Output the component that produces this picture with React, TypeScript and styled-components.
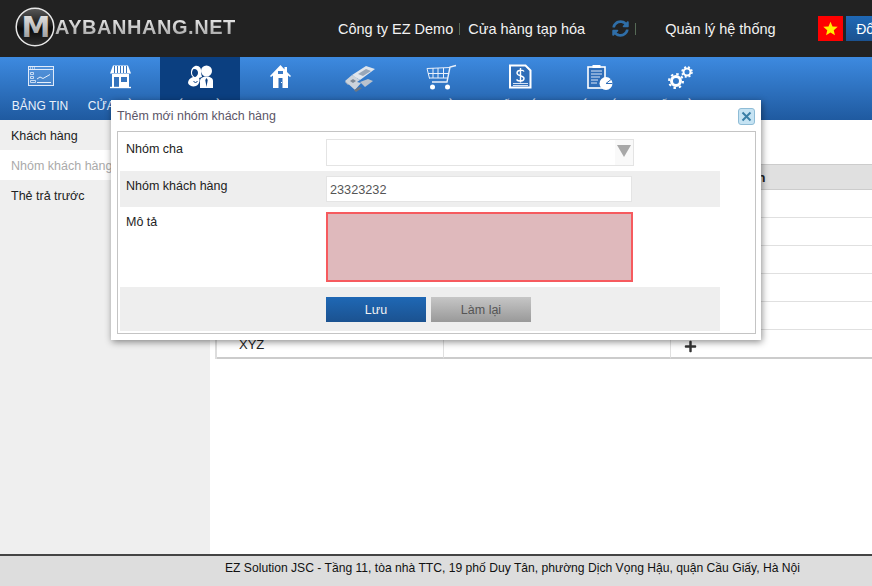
import styled, { createGlobalStyle } from 'styled-components';
import { FaPlus, FaSyncAlt } from 'react-icons/fa';

const GlobalStyle = createGlobalStyle`
  html, body {
    margin: 0;
    padding: 0;
    background: #fff;
    font-family: "Liberation Sans", Arial, sans-serif;
  }
  * {
    box-sizing: border-box;
  }
`;

const DashboardIcon = () => (
  <svg width="40" height="32" viewBox="0 0 40 32" fill="none">
    <rect x="8.5" y="4.5" width="25" height="19" fill="#fff" fillOpacity="0.12" stroke="#dfeafa" />
    <path d="M9 7.5h24" stroke="#dfeafa" />
    <path d="M10 6h1M12 6h1M14 6h1" stroke="#fff" />
    <path d="M10.5 10.5h3v2h-3zM10.5 14.5h3v2h-3zM10.5 18.5h5v2h-5z" stroke="#e6effb" strokeWidth="0.8" />
    <path d="M17 17l3-2 3 1.5 7-4" stroke="#e6effb" />
    <path d="M17 20.5h14" stroke="#e6effb" />
  </svg>
);

const StoreIcon = () => (
  <svg width="40" height="32" viewBox="0 0 40 32" fill="none">
    <path d="M13 3.5h15l3 8H10z" fill="#fff" />
    <path d="M14.5 4v7M17.5 4v7M20.5 4v7M23.5 4v7M26.5 4v7" stroke="#3674bd" />
    <path d="M12 12h17v13H12z" fill="#fff" />
    <rect x="14" y="15" width="5" height="10" fill="#3674bd" />
    <rect x="21" y="15" width="6" height="5" fill="#3674bd" />
    <path d="M10 25.5h21" stroke="#fff" strokeWidth="1.4" />
  </svg>
);

const UsersIcon = () => (
  <svg width="40" height="32" viewBox="0 0 40 32" fill="none">
    <path d="M15 4c4-1 7 2 6 7l1 4-3 1c1 2 1 6-3 8-3 1-7 0-8-3 0-3 2-5 5-6-3-2-3-9 2-11z" fill="#fff" />
    <path d="M14 7c3 0 4 2 4 4s-2 4-3 4-3-2-3-4 1-4 2-4z" fill="#0b3f80" />
    <path d="M13.5 19l2 2 2-2" stroke="#0b3f80" />
    <circle cx="26.5" cy="9" r="5.5" fill="#fff" />
    <path d="M20 26v-7c0-3 3-4.500 6.500-4.500S33 16 33 19v7z" fill="#fff" />
    <path d="M26.500 16l-1.200 2 1.200 7 1.200-7z" fill="#0b3f80" />
  </svg>
);

const HomeIcon = () => (
  <svg width="40" height="32" viewBox="0 0 40 32">
    <path d="M20.500 3L10 14l1 1 2-1.500V26h15V13.500l2 1.500 1-1-4-4V5h-2.500v2.500z" fill="#fff" />
    <rect x="18" y="9" width="5" height="3" fill="#3a7bc7" />
    <rect x="18.500" y="16" width="4" height="10" fill="#2f6fba" />
    <rect x="21" y="20" width="1" height="1" fill="#fff" />
  </svg>
);

const MoneyIcon = () => (
  <svg width="40" height="32" viewBox="0 0 40 32">
    <path d="M5 20L22 8l3 2-17 13z" fill="#a9b4c2" />
    <path d="M12 13L26 4l9 3-15 11z" fill="#dfe5ec" />
    <path d="M18 12l8-5 5 2-8 5z" fill="#99a7b8" />
    <path d="M5 19l7-6 8 5-3 2 4 1-6 7z" fill="#ccd3db" />
    <path d="M20 20l8-3 5 2-8 6z" fill="#b9c2cd" />
    <path d="M14 28l5-3 3 1-6 4z" fill="#6e7782" />
    <path d="M10 19l3-2 3 2-3 2z" fill="#7f8995" />
  </svg>
);

const CartIcon = () => (
  <svg width="40" height="32" viewBox="0 0 40 32" fill="none" stroke="#e9f0fa">
    <path d="M36 3.500l-6 1.500-3 15H12" strokeWidth="1.400" />
    <path d="M7 6.500l23-1M8 11.500h21M9 16h19M7 6.500l2.500 10M13 6v10M18 6v10M23.500 6v10" />
    <circle cx="12.500" cy="25" r="2.500" fill="#fff" stroke="none" />
    <circle cx="27.500" cy="25" r="2.500" fill="#fff" stroke="none" />
  </svg>
);

const InvoiceIcon = () => (
  <svg width="40" height="32" viewBox="0 0 40 32" fill="none">
    <path d="M10 3.500h15.500l5 5v17H10z" fill="#2e6db8" stroke="#fff" strokeWidth="2" />
    <path d="M13 21.500h15M13 23.500h15" stroke="#d6e4f6" />
    <path d="M24 9.500c-1-2-7-2-7 1.500s7 2 7 5.500-6 3-7.500 1M20.500 6v14.500" stroke="#fff" strokeWidth="1.400" />
  </svg>
);

const ReportIcon = () => (
  <svg width="40" height="32" viewBox="0 0 40 32" fill="none">
    <rect x="8" y="5" width="17" height="21" fill="#2e6db8" stroke="#fff" strokeWidth="1.600" />
    <rect x="12.500" y="3" width="8" height="3" fill="#fff" />
    <path d="M11 9h11M11 12h11M11 15h9M11 18h7M11 21h6" stroke="#dbe7f7" />
    <circle cx="26" cy="21.500" r="6.500" fill="#fff" />
    <path d="M26 21.500l5-4M26 21.500h6.500" stroke="#2e6db8" />
  </svg>
);

const GearsIcon = () => (
  <svg width="40" height="32" viewBox="0 0 40 32" fill="none" stroke="#fff">
    <circle cx="16" cy="19" r="4.500" strokeWidth="3" />
    <circle cx="16" cy="19" r="7" strokeWidth="2" strokeDasharray="2.500 3" />
    <circle cx="27" cy="10" r="3.500" strokeWidth="2" />
    <circle cx="27" cy="10" r="5" strokeWidth="1.500" strokeDasharray="2 2" />
  </svg>
);

const menu = [
  { label: 'BẢNG TIN', icon: <DashboardIcon /> },
  { label: 'CỬA HÀNG', icon: <StoreIcon /> },
  { label: 'KHÁCH HÀNG', icon: <UsersIcon />, active: true },
  { label: 'KHO', icon: <HomeIcon /> },
  { label: 'THU CHI', icon: <MoneyIcon /> },
  { label: 'ĐƠN HÀNG', icon: <CartIcon /> },
  { label: 'KẾ TOÁN', icon: <InvoiceIcon /> },
  { label: 'BÁO CÁO', icon: <ReportIcon /> },
  { label: 'CẤU HÌNH', icon: <GearsIcon /> },
];

const sideItems = ['Khách hàng', 'Nhóm khách hàng', 'Thẻ trả trước'];
const groups = ['Nhóm A', 'Nhóm B', 'Nhóm C', 'Nhóm D', 'Nhóm E', 'XYZ'];

export default function App() {
  return (
    <Page>
      <GlobalStyle />
      <Header>
        <LogoArea>
          <svg width="40" height="40" viewBox="0 0 40 40">
            <defs>
              <linearGradient id="badge" x1="0" y1="0" x2="0" y2="1">
                <stop offset="0" stopColor="#5a5a5a" />
                <stop offset="0.55" stopColor="#0b0b0b" />
                <stop offset="1" stopColor="#2e2e2e" />
              </linearGradient>
              <linearGradient id="badgeM" x1="0" y1="0" x2="0" y2="1">
                <stop offset="0" stopColor="#f0f0f0" />
                <stop offset="1" stopColor="#8c8c8c" />
              </linearGradient>
            </defs>
            <circle cx="20" cy="20" r="18.800" fill="url(#badge)" stroke="#e8e8e8" strokeWidth="1.500" />
            <text
              x="21"
              y="30"
              textAnchor="middle"
              fontFamily="DejaVu Sans, sans-serif"
              fontWeight="700"
              fontSize="29"
              fill="url(#badgeM)"
            >
              M
            </text>
          </svg>
          <Wordmark>AYBANHANG.NET</Wordmark>
        </LogoArea>
        <HeaderLink>Công ty EZ Demo</HeaderLink>
        <HeaderDivider />
        <HeaderLink>Cửa hàng tạp hóa</HeaderLink>
        <SyncButton>
          <FaSyncAlt size={17} />
        </SyncButton>
        <HeaderDivider />
        <SystemLink>Quản lý hệ thống</SystemLink>
        <Flag>
          <svg width="15" height="15" viewBox="0 0 24 24">
            <path d="M12 1l3.200 7.600 8.300.7-6.300 5.400 1.900 8.100L12 18.500l-7.100 4.300 1.900-8.100L.5 9.300l8.300-.7z" fill="#ffef00" />
          </svg>
        </Flag>
        <HeaderButton>Đổi mật khẩu</HeaderButton>
      </Header>

      <Nav>
        {menu.map((item) => (
          <NavItem key={item.label} $active={item.active}>
            {item.icon}
            <NavLabel>{item.label}</NavLabel>
          </NavItem>
        ))}
      </Nav>

      <Body>
        <Sidebar>
          {sideItems.map((item, i) => (
            <SideItem key={item} $active={i === 1}>
              {item}
            </SideItem>
          ))}
        </Sidebar>
        <Main>
          <GroupTable>
            <thead>
              <tr>
                <HeadCell>Nhóm khách hàng</HeadCell>
                <HeadCell>Mô tả</HeadCell>
                <ActionHead>Thêm con</ActionHead>
              </tr>
            </thead>
            <tbody>
              {groups.map((group) => (
                <tr key={group}>
                  <NameCell>{group}</NameCell>
                  <Cell />
                  <PlusCell>
                    <FaPlus size={13} color="#333" />
                  </PlusCell>
                </tr>
              ))}
            </tbody>
          </GroupTable>
        </Main>
      </Body>

      <Footer>EZ Solution JSC - Tầng 11, tòa nhà TTC, 19 phố Duy Tân, phường Dịch Vọng Hậu, quận Cầu Giấy, Hà Nội</Footer>

      <Modal>
        <ModalHead>
          <ModalTitle>Thêm mới nhóm khách hàng</ModalTitle>
          <CloseButton>
            <svg width="11" height="11" viewBox="0 0 11 11">
              <path d="M1.500 1.500l8 8M9.500 1.500l-8 8" stroke="#3a7fa6" strokeWidth="2" />
            </svg>
          </CloseButton>
        </ModalHead>
        <FormBox>
          <FormRow $height={39}>
            <FieldLabel $top={10}>Nhóm cha</FieldLabel>
            <SelectBox>
              <SelectArrow>
                <svg width="14" height="12" viewBox="0 0 14 12">
                  <path d="M0 0h14L7 12z" fill="#a8a8a8" />
                </svg>
              </SelectArrow>
            </SelectBox>
          </FormRow>
          <FormRow $height={36} $shaded>
            <FieldLabel $top={8}>Nhóm khách hàng</FieldLabel>
            <TextBox>23323232</TextBox>
          </FormRow>
          <FormRow $height={80}>
            <FieldLabel $top={8}>Mô tả</FieldLabel>
            <ErrorArea />
          </FormRow>
          <ButtonRow>
            <SaveButton>Lưu</SaveButton>
            <ResetButton>Làm lại</ResetButton>
          </ButtonRow>
        </FormBox>
      </Modal>
    </Page>
  );
}

const Page = styled.div`
  position: relative;
  display: flex;
  flex-direction: column;
  width: 872px;
  height: 586px;
  overflow: hidden;
`;

const Header = styled.header`
  display: flex;
  align-items: center;
  flex: 0 0 57px;
  background: #222;
  color: #fff;
`;

const LogoArea = styled.div`
  display: flex;
  align-items: center;
  flex: 0 0 338px;
  padding-left: 15px;
  padding-bottom: 3px;
`;

const Wordmark = styled.span`
  font-size: 20px;
  font-weight: 700;
  letter-spacing: 0.55px;
  background: linear-gradient(#f2f2f2, #9c9c9c);
  -webkit-background-clip: text;
  background-clip: text;
  color: transparent;
`;

const HeaderLink = styled.span`
  flex-shrink: 0;
  font-size: 14.5px;
  color: #f2f2f2;
`;

const HeaderDivider = styled.span`
  flex-shrink: 0;
  width: 1px;
  height: 12px;
  margin: 0 8px 0 6px;
  background: #566a56;
`;

const SyncButton = styled.span`
  display: flex;
  flex-shrink: 0;
  margin-left: 27px;
  color: #2f6ea8;
`;

const SystemLink = styled(HeaderLink)`
  margin-left: 21px;
  width: 153px;
`;

const Flag = styled.span`
  display: flex;
  align-items: center;
  justify-content: center;
  flex: 0 0 25px;
  height: 25px;
  background: #f00;
`;

const HeaderButton = styled.button`
  flex-shrink: 0;
  height: 25px;
  margin-left: 3px;
  padding: 0 10px;
  border: 0;
  background: linear-gradient(#1f68b5, #1b5290);
  color: #fff;
  font: 14px "Liberation Sans", Arial, sans-serif;
`;

const Nav = styled.nav`
  display: flex;
  flex: 0 0 63px;
  background: linear-gradient(#3d8ae0, #1f5aa0);
`;

const NavItem = styled.div<{ $active?: boolean }>`
  display: flex;
  flex-direction: column;
  align-items: center;
  flex: 0 0 80px;
  min-width: 0;
  padding-top: 5px;
  background: ${({ $active }) => ($active ? '#0b3f80' : 'transparent')};
`;

const NavLabel = styled.span`
  margin-top: 5px;
  font-size: 12px;
  line-height: 15px;
  white-space: nowrap;
  color: #e9f1fb;
`;

const Body = styled.div`
  display: flex;
  flex: 1;
  min-height: 0;
`;

const Sidebar = styled.aside`
  flex: 0 0 210px;
  background: #efefef;
`;

const SideItem = styled.div<{ $active?: boolean }>`
  height: 30px;
  padding: 1px 0 0 11px;
  font-size: 12.5px;
  line-height: 30px;
  background: ${({ $active }) => ($active ? '#fff' : 'transparent')};
  color: ${({ $active }) => ($active ? '#aaa' : '#222')};
`;

const Main = styled.main`
  flex: 1;
  min-width: 0;
  padding: 44px 0 0 5px;
  overflow: hidden;
  background: #fff;
`;

const GroupTable = styled.table`
  width: 720px;
  table-layout: fixed;
  border-collapse: separate;
  border-spacing: 0;
  border-left: 2px solid #ddd;
  font-size: 13px;
  color: #222;

  tbody tr:last-child td {
    height: 29px;
    border-bottom: 2px solid #ccc;
  }
`;

const HeadCell = styled.th`
  width: 227px;
  height: 26px;
  padding: 0;
  border-top: 1px solid #ccc;
  border-bottom: 1px solid #ccc;
  background: #e0e0e0;
  font-weight: 700;
  text-align: center;
`;

const ActionHead = styled(HeadCell)`
  width: auto;
  padding-left: 33px;
  text-align: left;
  white-space: nowrap;
`;

const Cell = styled.td`
  height: 28px;
  padding: 0;
  border-bottom: 1px solid #e0e0e0;
  border-right: 1px solid #e0e0e0;
`;

const NameCell = styled(Cell)`
  padding: 2px 0 0 22px;
`;

const PlusCell = styled(Cell)`
  padding: 8px 0 0 13px;
  border-right: 0;
`;

const Footer = styled.footer`
  flex: 0 0 32px;
  padding-left: 225px;
  border-top: 2px solid #444;
  background: #ddd;
  font-size: 12.13px;
  line-height: 25px;
  color: #111;
  white-space: nowrap;
`;

const Modal = styled.div`
  position: absolute;
  top: 100px;
  left: 111px;
  width: 650px;
  height: 240px;
  padding: 0 5px 0 6px;
  background: #fff;
  box-shadow: 1px 2px 7px rgba(0, 0, 0, 0.45);
`;

const ModalHead = styled.div`
  display: flex;
  align-items: center;
  justify-content: space-between;
  height: 31px;
  padding-right: 1px;
`;

const ModalTitle = styled.span`
  font-size: 12.45px;
  color: #5c5668;
`;

const CloseButton = styled.span`
  display: flex;
  align-items: center;
  justify-content: center;
  width: 17px;
  height: 17px;
  margin-top: 1px;
  border: 1px solid #8fbcd6;
  border-radius: 3px;
  background: #c5e3f3;
`;

const FormBox = styled.div`
  height: 203px;
  padding: 0 2px;
  border: 1px solid #c4c4c4;
`;

const FormRow = styled.div<{ $height: number; $shaded?: boolean }>`
  display: flex;
  align-items: flex-start;
  width: 600px;
  height: ${({ $height }) => $height}px;
  background: ${({ $shaded }) => ($shaded ? '#eee' : 'transparent')};
`;

const FieldLabel = styled.label<{ $top: number }>`
  flex: 0 0 206px;
  padding: ${({ $top }) => $top}px 0 0 6px;
  font-size: 12.5px;
  line-height: 15px;
  color: #222;
`;

const SelectBox = styled.div`
  display: flex;
  justify-content: flex-end;
  width: 308px;
  height: 27px;
  margin-top: 7px;
  border: 1px solid #e4e4e4;
`;

const SelectArrow = styled.div`
  display: flex;
  justify-content: center;
  padding-top: 5px;
  width: 18px;
  background: #f9f9f9;
`;

const TextBox = styled.div`
  width: 306px;
  height: 26px;
  margin-top: 5px;
  padding-left: 3px;
  border: 1px solid #e4e4e4;
  background: #fff;
  font-size: 12.7px;
  line-height: 26px;
  color: #555;
`;

const ErrorArea = styled.div`
  width: 307px;
  height: 70px;
  margin-top: 5px;
  border: 2px solid #f65a5e;
  background: #dfb9bc;
`;

const ButtonRow = styled.div`
  display: flex;
  gap: 5px;
  width: 600px;
  height: 44px;
  padding: 10px 0 0 206px;
  background: #eee;
`;

const SaveButton = styled.button`
  width: 100px;
  height: 25px;
  padding: 0;
  border: 0;
  background: linear-gradient(#1f68b5, #1b5290);
  color: #f2f2f2;
  font: 12.5px "Liberation Sans", Arial, sans-serif;
`;

const ResetButton = styled(SaveButton)`
  background: linear-gradient(#c6c6c6, #999);
  color: #555;
`;
